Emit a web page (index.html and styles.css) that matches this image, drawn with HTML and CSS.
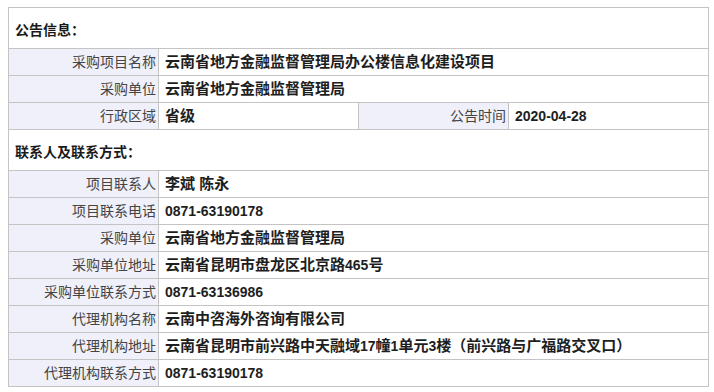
FILE: index.html
```html
<!DOCTYPE html>
<html lang="zh-CN">
<head>
<meta charset="utf-8">
<title>公告信息</title>
<link rel="stylesheet" href="styles.css">
</head>
<body>
<table class="info">
  <colgroup>
    <col class="c1"><col class="c2"><col class="c3"><col class="c4">
  </colgroup>
  <tbody>
    <tr class="sec"><td colspan="4">公告信息：</td></tr>
    <tr><td class="lb">采购项目名称</td><td class="val" colspan="3">云南省地方金融监督管理局办公楼信息化建设项目</td></tr>
    <tr><td class="lb">采购单位</td><td class="val" colspan="3">云南省地方金融监督管理局</td></tr>
    <tr><td class="lb">行政区域</td><td class="val">省级</td><td class="lb">公告时间</td><td class="val"><span class="num">2020-04-28</span></td></tr>
    <tr class="sec"><td colspan="4">联系人及联系方式：</td></tr>
    <tr><td class="lb">项目联系人</td><td class="val" colspan="3">李斌 陈永</td></tr>
    <tr><td class="lb">项目联系电话</td><td class="val" colspan="3"><span class="num">0871-63190178</span></td></tr>
    <tr><td class="lb">采购单位</td><td class="val" colspan="3">云南省地方金融监督管理局</td></tr>
    <tr><td class="lb">采购单位地址</td><td class="val" colspan="3">云南省昆明市盘龙区北京路<span class="num">465</span>号</td></tr>
    <tr><td class="lb">采购单位联系方式</td><td class="val" colspan="3"><span class="num">0871-63136986</span></td></tr>
    <tr><td class="lb">代理机构名称</td><td class="val" colspan="3">云南中咨海外咨询有限公司</td></tr>
    <tr><td class="lb">代理机构地址</td><td class="val" colspan="3">云南省昆明市前兴路中天融域<span class="num">17</span>幢<span class="num">1</span>单元<span class="num">3</span>楼（前兴路与广福路交叉口）</td></tr>
    <tr><td class="lb">代理机构联系方式</td><td class="val" colspan="3"><span class="num">0871-63190178</span></td></tr>
  </tbody>
</table>
</body>
</html>
```
FILE: styles.css
```css
html, body {
  background: #ffffff;
}
body {
  margin: 7px 0 0 8px;
  font-family: "Liberation Sans", "Noto Sans CJK SC", sans-serif;
  color: #222;
}
.info {
  border-collapse: collapse;
  table-layout: fixed;
  width: 700px;
}
.c1 { width: 150px; }
.c2 { width: 200px; }
.c3 { width: 150px; }
.c4 { width: 200px; }
.info td {
  border: 1px solid #c4c4c4;
  height: 26px;
  padding: 0;
  line-height: 20px;
  white-space: nowrap;
}
.sec td {
  height: 36px;
  padding: 4px 0 0 6px;
  vertical-align: middle;
  font-size: 14px;
  font-weight: bold;
  color: #1a1a1a;
}
.lb {
  background: #eff0fa;
  text-align: right;
  padding-right: 2px !important;
  font-size: 14px;
  color: #444;
}
.val {
  padding-left: 6px !important;
  font-size: 15px;
  font-weight: bold;
  color: #1e1e1e;
}
.num {
  font-size: 14px;
}
```
